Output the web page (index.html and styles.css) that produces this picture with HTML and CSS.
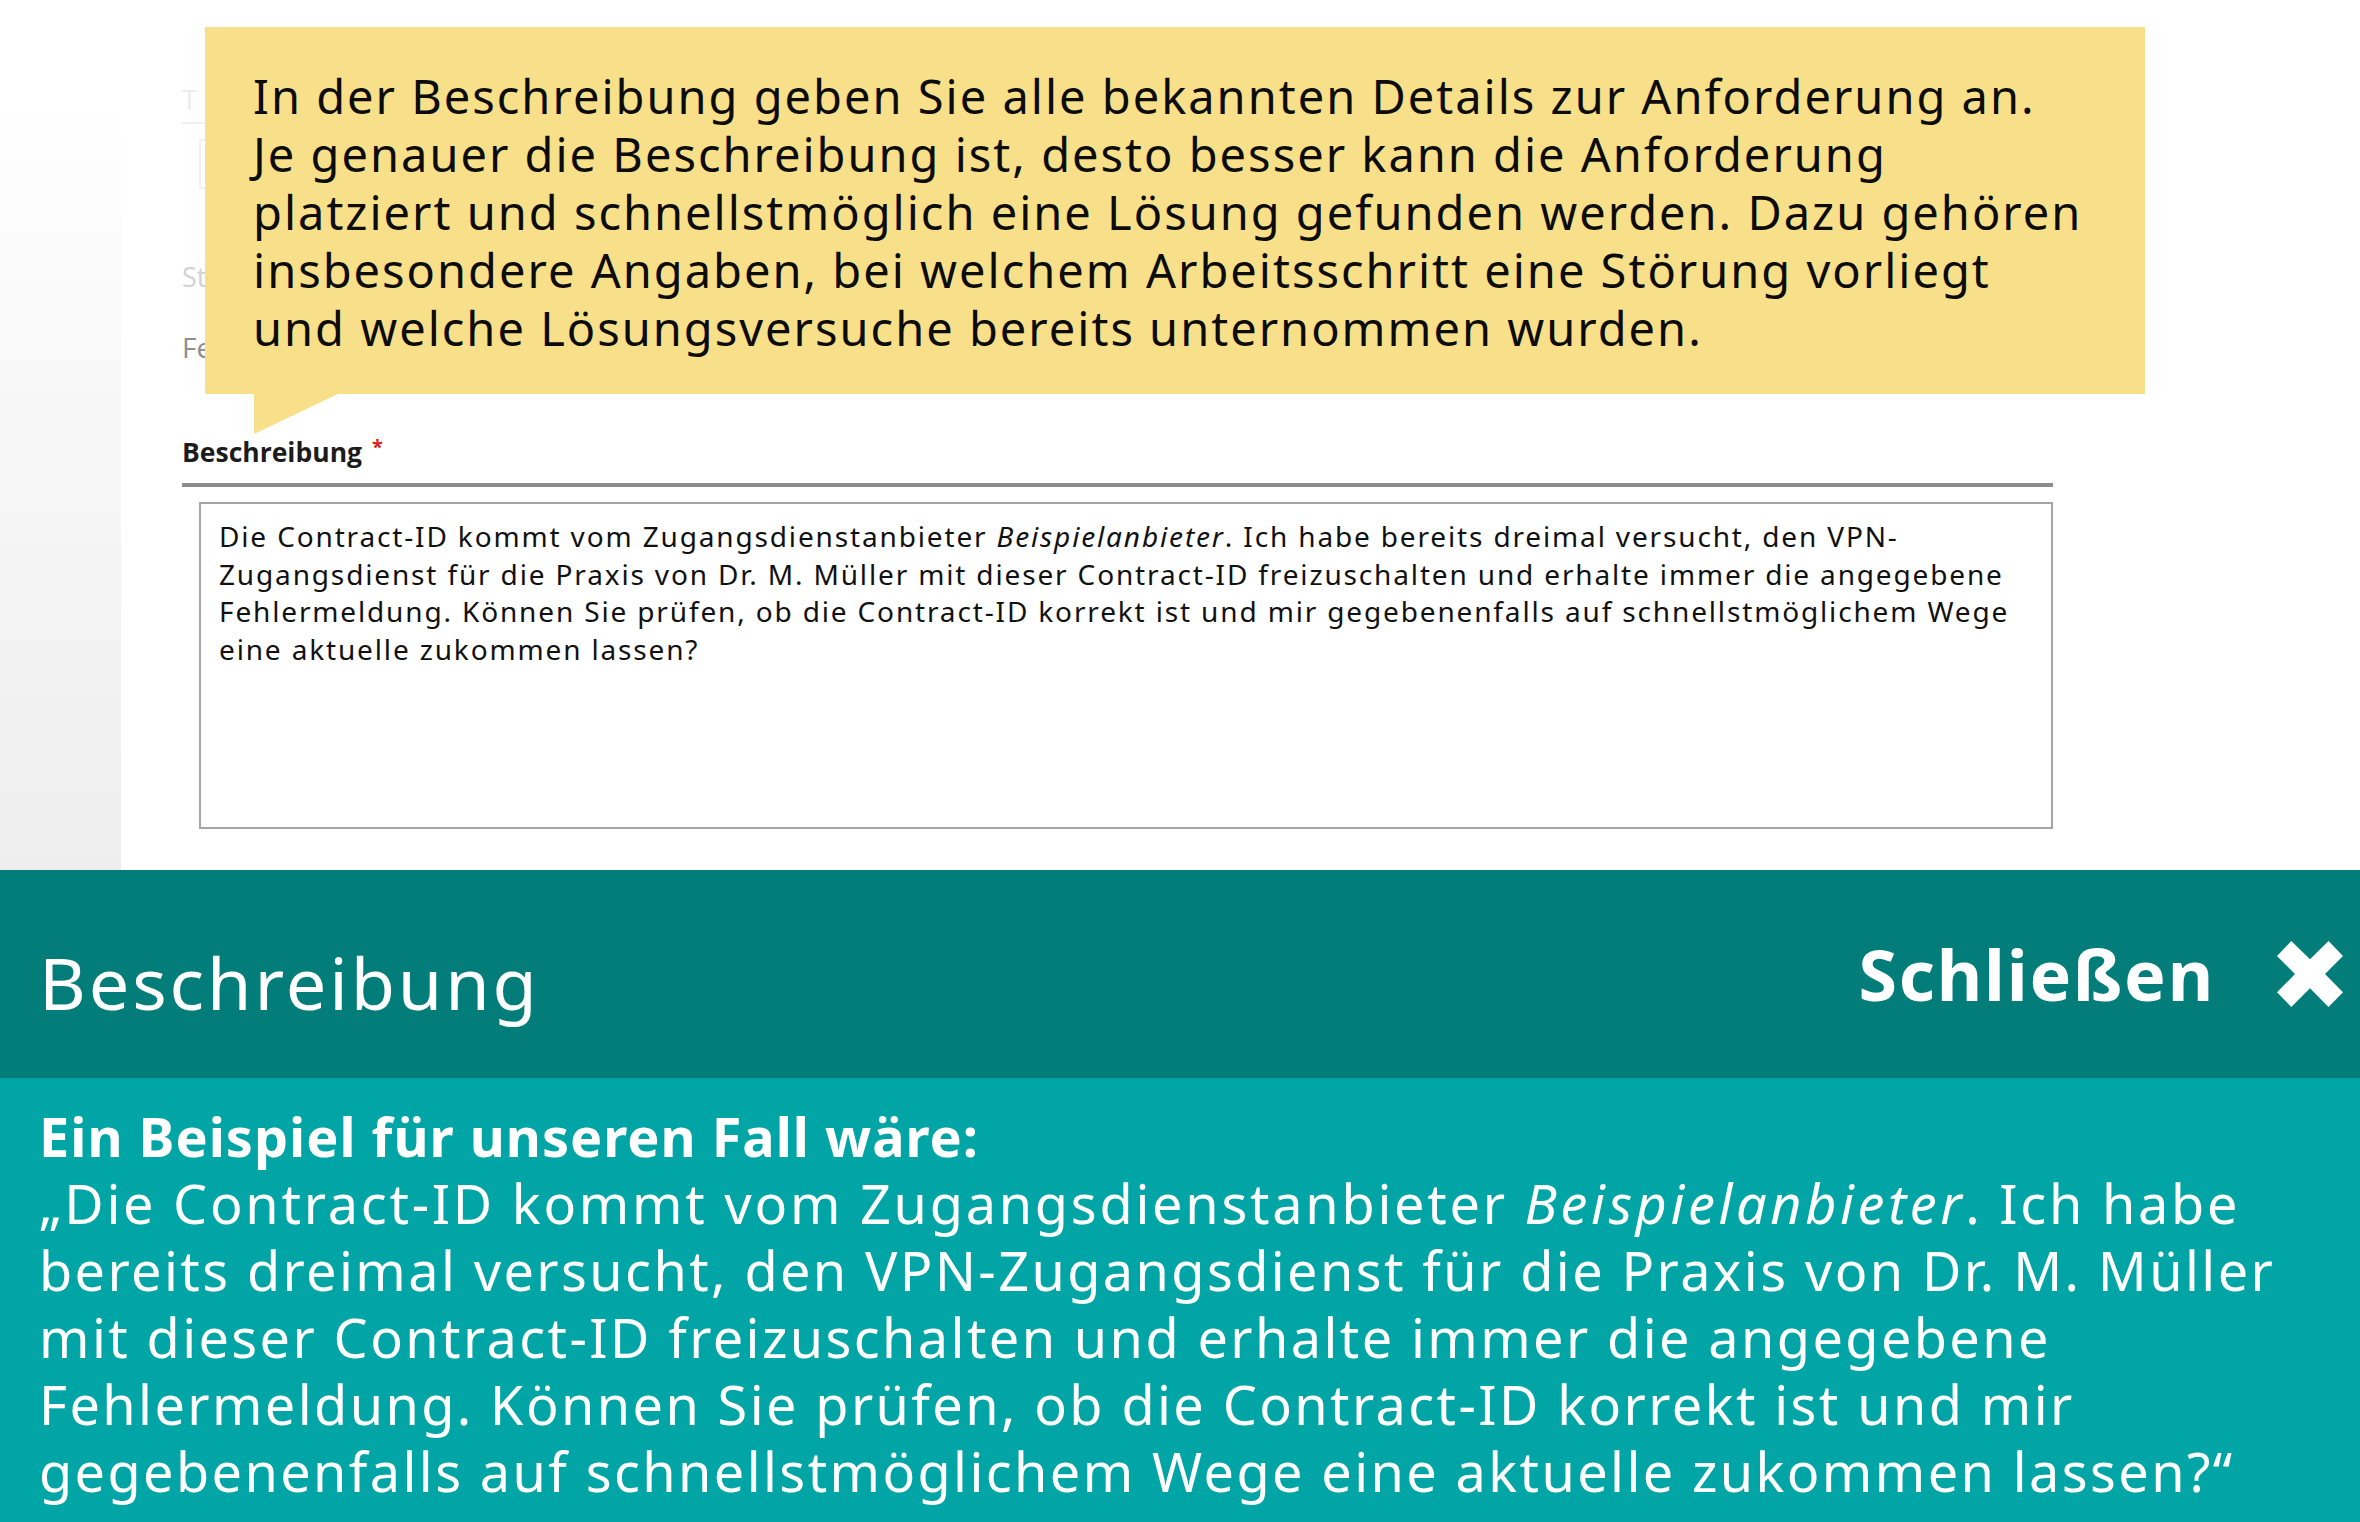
FILE: index.html
```html
<!DOCTYPE html>
<html lang="de">
<head>
<meta charset="utf-8">
<title>Beschreibung</title>
<link rel="stylesheet" href="styles.css">
</head>
<body>
<div class="page">
  <div class="form-area">
    <aside class="sidebar"></aside>
    <main class="form">
      <div class="ghost-field">
        <div class="ghost-label ghost-t">T</div>
        <div class="ghost-rule"></div>
        <div class="ghost-input"></div>
      </div>
      <div class="ghost-label ghost-st">St</div>
      <div class="ghost-label ghost-fe">Fe</div>
      <div class="field">
        <label class="field-label">Beschreibung <span class="req">*</span></label>
        <div class="field-rule"></div>
        <div class="textarea">Die Contract-ID kommt vom Zugangsdienstanbieter <em>Beispielanbieter</em>. Ich habe bereits dreimal versucht, den VPN-<br>Zugangsdienst für die Praxis von Dr. M. Müller mit dieser Contract-ID freizuschalten und erhalte immer die angegebene<br>Fehlermeldung. Können Sie prüfen, ob die Contract-ID korrekt ist und mir gegebenenfalls auf schnellstmöglichem Wege<br>eine aktuelle zukommen lassen?</div>
      </div>
    </main>
    <div class="tooltip">
      <p>In der Beschreibung geben Sie alle bekannten Details zur Anforderung an.<br>Je genauer die Beschreibung ist, desto besser kann die Anforderung<br>platziert und schnellstmöglich eine Lösung gefunden werden. Dazu gehören<br>insbesondere Angaben, bei welchem Arbeitsschritt eine Störung vorliegt<br>und welche Lösungsversuche bereits unternommen wurden.</p>
      <svg class="tail" viewBox="0 0 84 40" width="84" height="40"><polygon points="0,0 84,0 0,40" fill="#f8df89"/></svg>
    </div>
  </div>
  <section class="panel">
    <header class="panel-head">
      <h1 class="panel-title">Beschreibung</h1>
      <button class="close">
        <span class="close-text">Schließen</span>
        <svg class="close-x" viewBox="0 0 66 66" width="66" height="66"><polygon points="0,15 14.3,0 33,18.3 51.5,0 66,15 48,33 66,51.3 51.5,66 33,47.3 14.3,66 0,51.3 18,33" fill="#fff"/></svg>
      </button>
    </header>
    <div class="panel-body">
      <p class="example-head">Ein Beispiel für unseren Fall wäre:</p>
      <p class="example"><span class="first-line">„Die Contract-ID kommt vom Zugangsdienstanbieter <em>Beispielanbieter</em>. Ich habe</span><br>bereits dreimal versucht, den VPN-Zugangsdienst für die Praxis von Dr. M. Müller<br>mit dieser Contract-ID freizuschalten und erhalte immer die angegebene<br>Fehlermeldung. Können Sie prüfen, ob die Contract-ID korrekt ist und mir<br>gegebenenfalls auf schnellstmöglichem Wege eine aktuelle zukommen lassen?“</p>
    </div>
  </section>
</div>
</body>
</html>
```

FILE: styles.css
```css
* { box-sizing: border-box; }
html, body { margin: 0; padding: 0; background: #fff; }
body { font-family: "Open Sans", "Noto Sans", sans-serif; width: 2360px; height: 1522px; overflow: hidden; }

.page { width: 2360px; height: 1522px; display: flex; flex-direction: column; }

.form-area { position: relative; height: 870px; display: flex; }
.sidebar {
  width: 121px;
  margin-top: 92px;
  background: linear-gradient(#ffffff 0%, #f9f9f9 30%, #eeeeee 100%);
}
.form { width: 1932px; padding-left: 61px; padding-top: 84px; }

.ghost-label { font-family: "Open Sans", sans-serif; font-size: 27px; line-height: 32px; }
.ghost-t { color: #ececec; }
.ghost-rule { height: 2px; background: #f0f0f0; margin-top: 6px; width: 200px; }
.ghost-input { margin: 15px 0 0 17px; width: 200px; height: 50px; border: 2px solid #f1f1f1; border-right: none; }
.ghost-st { color: #d2d2d2; margin-top: 72px; }
.ghost-fe { color: #8e8e8e; margin-top: 38px; font-size: 28px; }

.field { margin-top: 68px; }
.field-label { display: block; font-family: "Open Sans", sans-serif; font-weight: 700; font-size: 26.5px; line-height: 32px; color: #1c1c1c; }
.req { color: #e0201b; font-size: 20px; vertical-align: 8px; margin-left: 3px; }
.field-rule { height: 4px; background: #8c8c8c; margin-top: 15px; }
.textarea {
  margin: 15px 0 0 17px;
  height: 327px;
  border: 2px solid #a5a5a5;
  padding: 14px 18px;
  font-family: "Noto Sans", sans-serif;
  font-size: 28px;
  letter-spacing: 1.85px;
  line-height: 37.6px;
  color: #111;
  white-space: nowrap;
}
.textarea em { font-style: italic; }

.tooltip {
  position: absolute;
  left: 205px; top: 27px;
  width: 1940px; height: 367px;
  background: #f8df89;
  padding: 40px 0 0 48px;
}
.tooltip p {
  margin: 0;
  font-family: "Noto Sans", sans-serif;
  font-size: 47px;
  letter-spacing: 2px;
  line-height: 58px;
  color: #0c0c0c;
  white-space: nowrap;
}
.tail { position: absolute; left: 49px; top: 367px; display: block; }

.panel { flex: 1; display: flex; flex-direction: column; }
.panel-head {
  height: 208px;
  background: #027d7a;
  display: flex;
  align-items: center;
  justify-content: space-between;
  padding: 0 17px 0 39px;
  color: #fff;
}
.panel-title { margin: 0; font-family: "Noto Sans", sans-serif; font-weight: 400; font-size: 72px; letter-spacing: 2.9px; line-height: 1; position: relative; top: 8px; }
.close { background: none; border: 0; padding: 0; display: flex; align-items: center; gap: 62px; color: #fff; cursor: pointer; }
.close-text { font-family: "Noto Sans", sans-serif; font-weight: 700; font-size: 70px; letter-spacing: 1.8px; line-height: 1; }
.close-x { display: block; }

.panel-body {
  flex: 1;
  background: #02a5a5;
  color: #fff;
  padding: 25px 39px 0;
  font-family: "Noto Sans", sans-serif;
  font-size: 54px;
  line-height: 67px;
}
.panel-body p { margin: 0; white-space: nowrap; }
.example-head { font-weight: 700; letter-spacing: 1px; }
.example { letter-spacing: 2.4px; }
.example .first-line { letter-spacing: 2.75px; }
.example em { letter-spacing: 3.6px; }
```
